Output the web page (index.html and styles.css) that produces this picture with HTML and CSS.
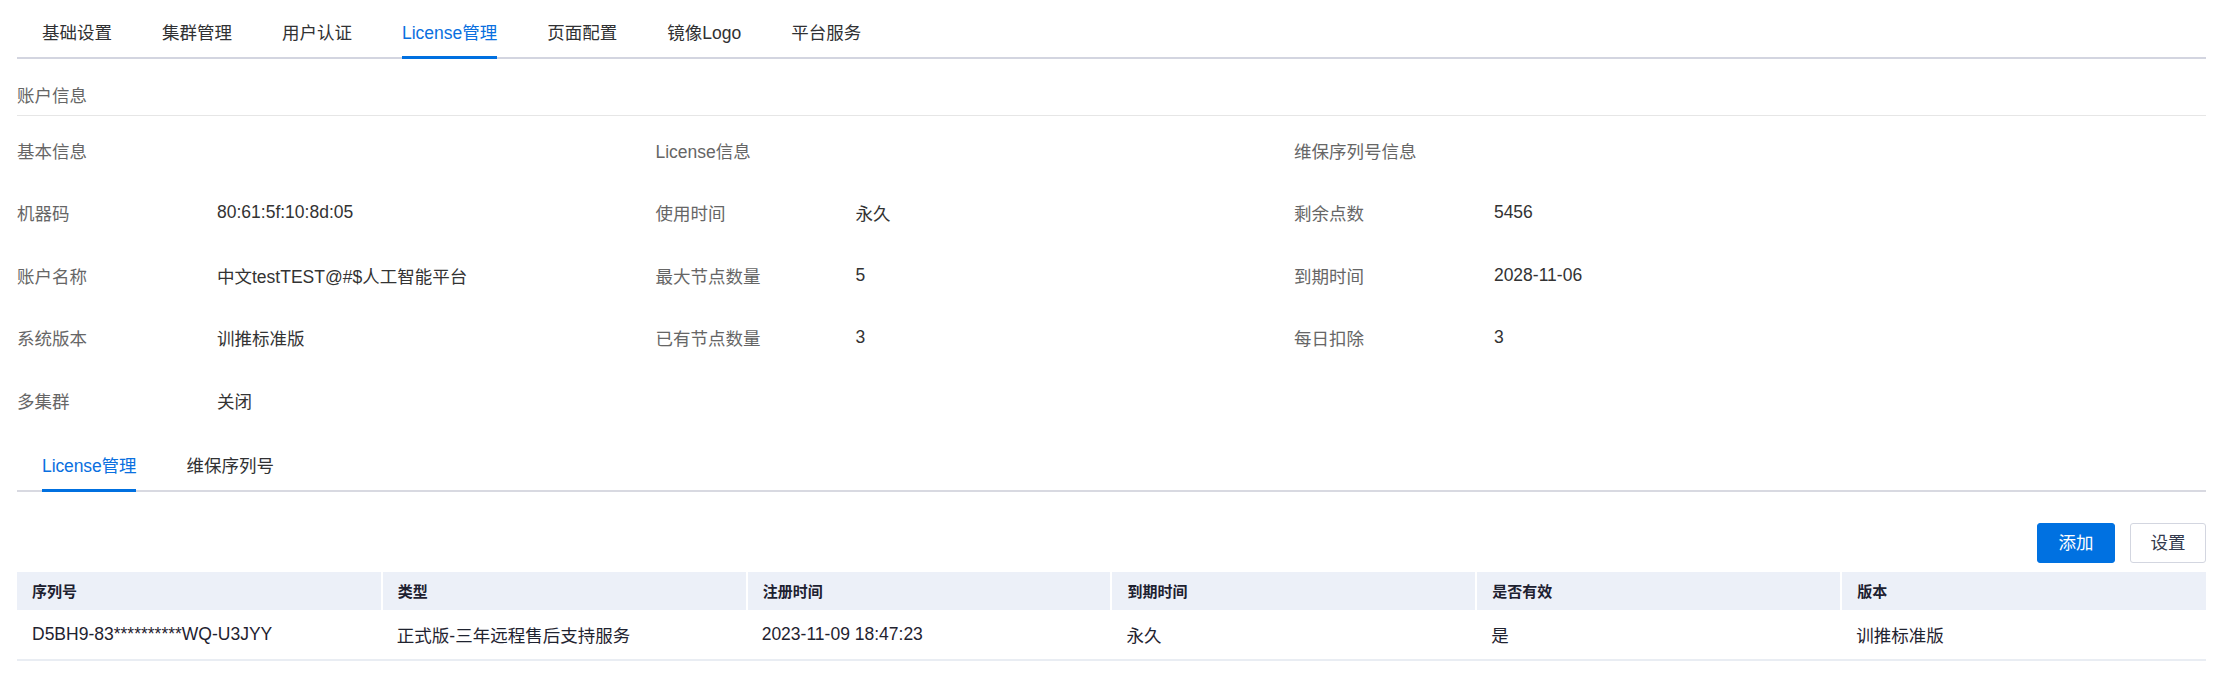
FILE: index.html
```html
<!DOCTYPE html>
<html lang="zh-CN">
<head>
<meta charset="utf-8">
<title>License管理</title>
<link rel="stylesheet" href="styles.css">
</head>
<body>
<div class="page">
  <div class="tabs top-tabs">
    <div class="tab">基础设置</div>
    <div class="tab">集群管理</div>
    <div class="tab">用户认证</div>
    <div class="tab active">License管理</div>
    <div class="tab">页面配置</div>
    <div class="tab">镜像Logo</div>
    <div class="tab">平台服务</div>
  </div>

  <div class="section-title">账户信息</div>

  <div class="info-grid">
    <div class="info-col">
      <div class="info-row"><span class="label">基本信息</span></div>
      <div class="info-row"><span class="label">机器码</span><span class="value">80:61:5f:10:8d:05</span></div>
      <div class="info-row"><span class="label">账户名称</span><span class="value">中文testTEST@#$人工智能平台</span></div>
      <div class="info-row"><span class="label">系统版本</span><span class="value">训推标准版</span></div>
      <div class="info-row"><span class="label">多集群</span><span class="value">关闭</span></div>
    </div>
    <div class="info-col">
      <div class="info-row"><span class="label">License信息</span></div>
      <div class="info-row"><span class="label">使用时间</span><span class="value">永久</span></div>
      <div class="info-row"><span class="label">最大节点数量</span><span class="value">5</span></div>
      <div class="info-row"><span class="label">已有节点数量</span><span class="value">3</span></div>
    </div>
    <div class="info-col">
      <div class="info-row"><span class="label">维保序列号信息</span></div>
      <div class="info-row"><span class="label">剩余点数</span><span class="value">5456</span></div>
      <div class="info-row"><span class="label">到期时间</span><span class="value">2028-11-06</span></div>
      <div class="info-row"><span class="label">每日扣除</span><span class="value">3</span></div>
    </div>
  </div>

  <div class="tabs sub-tabs">
    <div class="tab active">License管理</div>
    <div class="tab">维保序列号</div>
  </div>

  <div class="toolbar">
    <button class="btn btn-primary">添加</button>
    <button class="btn">设置</button>
  </div>

  <table class="data-table">
    <thead>
      <tr>
        <th>序列号</th>
        <th>类型</th>
        <th>注册时间</th>
        <th>到期时间</th>
        <th>是否有效</th>
        <th>版本</th>
      </tr>
    </thead>
    <tbody>
      <tr>
        <td>D5BH9-83**********WQ-U3JYY</td>
        <td>正式版-三年远程售后支持服务</td>
        <td>2023-11-09 18:47:23</td>
        <td>永久</td>
        <td>是</td>
        <td>训推标准版</td>
      </tr>
    </tbody>
  </table>
</div>
</body>
</html>
```

FILE: styles.css
```css
* {
  box-sizing: border-box;
}

html, body {
  margin: 0;
  padding: 0;
  background: #ffffff;
}

body {
  font-family: "Liberation Sans", "Noto Sans CJK SC", sans-serif;
  font-size: 17.5px;
  color: #303133;
}

.page {
  padding: 9px 14px 0 17px;
}

/* Tabs */
.tabs {
  display: flex;
  border-bottom: 2px solid #d3d5e0;
}

.tab {
  position: relative;
  padding: 0 25px;
  height: 48px;
  line-height: 48px;
  font-size: 17.5px;
  color: #303133;
  white-space: nowrap;
}

.tab.active {
  color: #0a70e0;
}

.tab.active::after {
  content: "";
  position: absolute;
  left: 25px;
  right: 25px;
  bottom: -2px;
  height: 3px;
  background: #0070e0;
}

.sub-tabs {
  margin-top: 10px;
  border-bottom-color: #d8d9e1;
}

.sub-tabs .tab:first-child {
  letter-spacing: -0.1px;
}

/* Section title */
.section-title {
  margin-top: 19px;
  height: 38px;
  line-height: 37px;
  color: #666666;
  border-bottom: 1px solid #e6e6e6;
}

/* Info grid */
.info-grid {
  display: flex;
  padding-top: 3px;
}

.info-col {
  width: 29.1667%;
}

.info-row {
  display: flex;
  height: 62.5px;
  align-items: center;
}

.label {
  width: 200px;
  flex-shrink: 0;
  color: #666666;
}

.value {
  color: #333333;
}

/* Toolbar */
.toolbar {
  display: flex;
  justify-content: flex-end;
  gap: 15px;
  margin-top: 31px;
}

.btn {
  height: 40px;
  width: 76px;
  padding: 0;
  font-family: "Liberation Sans", "Noto Sans CJK SC", sans-serif;
  font-size: 17.5px;
  color: #333a4d;
  background: #ffffff;
  border: 1px solid #d3d6e0;
  border-radius: 3px;
  line-height: 38px;
  text-align: center;
}

.btn-primary {
  width: 78px;
  background: #0071e1;
  border-color: #0071e1;
  color: #ffffff;
}

/* Table */
.data-table {
  width: 100%;
  margin-top: 9px;
  border-collapse: collapse;
  table-layout: fixed;
}

.data-table th {
  height: 38px;
  padding: 0 15px;
  text-align: left;
  font-size: 15px;
  font-weight: bold;
  color: #1d2130;
  background: #ecf0f8;
  border-right: 2px solid #ffffff;
}

.data-table th:last-child {
  border-right: none;
}

.data-table td {
  height: 50px;
  padding: 0 15px;
  text-align: left;
  font-size: 17.5px;
  color: #1f2330;
  border-bottom: 2px solid #e9edf3;
  white-space: nowrap;
}
```
